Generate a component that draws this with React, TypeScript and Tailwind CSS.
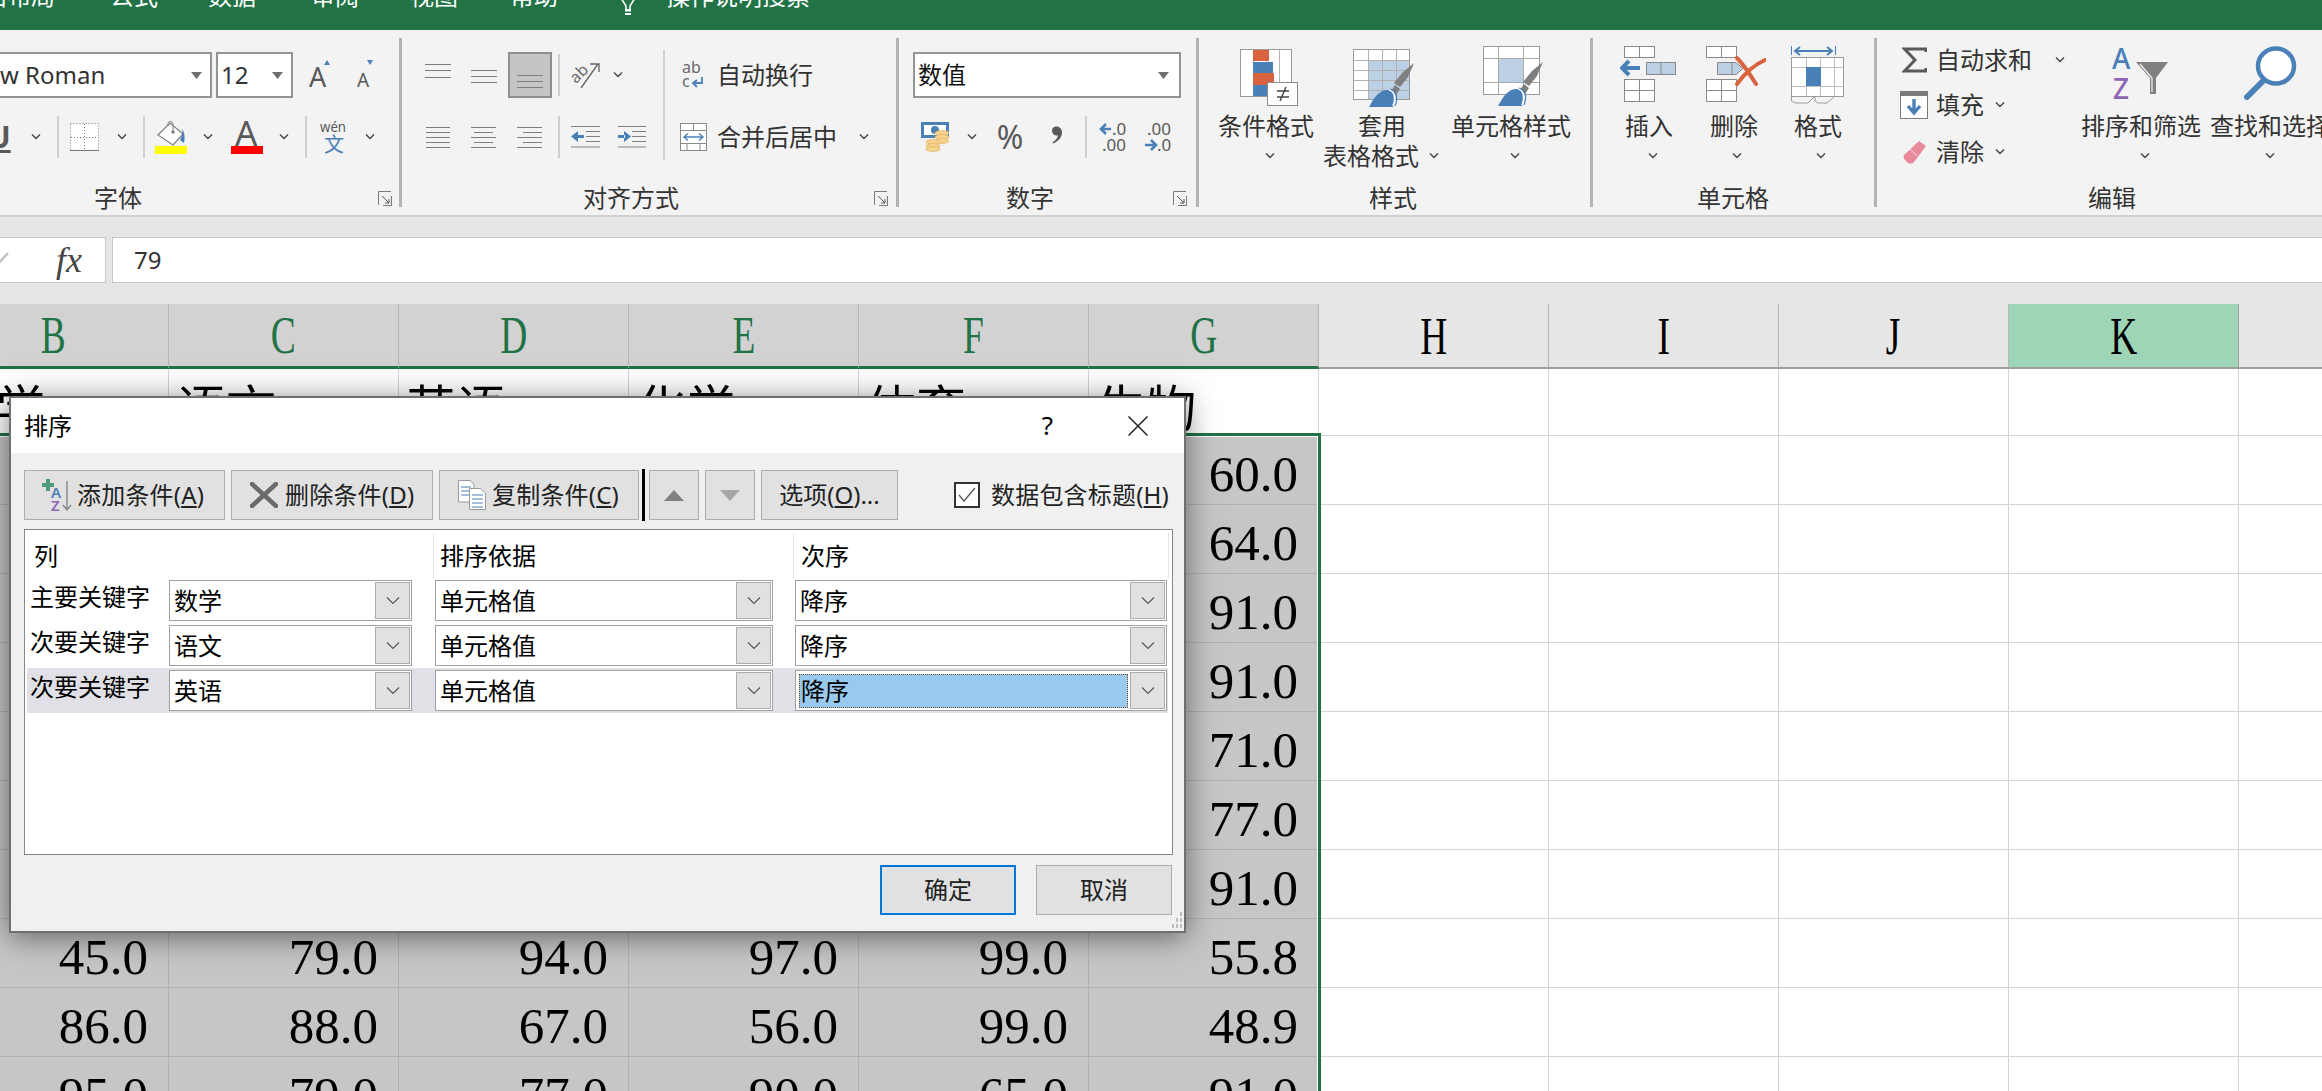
import React from "react";

const CJK = "font-['Noto_Sans','Noto_Sans_CJK_SC',sans-serif]";
const SERIF = "font-['Liberation_Serif','Noto_Sans_CJK_SC',serif]";

function Chev({ className = "" }: { className?: string }) {
  return (
    <svg width="10" height="6" viewBox="0 0 10 6" className={"shrink-0 " + className}>
      <polyline points="1,0.5 5,4.5 9,0.5" fill="none" stroke="#444" strokeWidth="1.4" />
    </svg>
  );
}
function Tri({ className = "" }: { className?: string }) {
  return (
    <svg width="11" height="7" viewBox="0 0 11 7" className={"shrink-0 " + className}>
      <polygon points="0,0 11,0 5.5,7" fill="#6e6e6e" />
    </svg>
  );
}
function Launcher({ className = "" }: { className?: string }) {
  return (
    <svg width="14" height="15" viewBox="0 0 14 15" className={"shrink-0 " + className}>
      <path d="M0.5 14V0.5H13" fill="none" stroke="#7a7a7a" />
      <path d="M13.5 5V14.5H5" fill="none" stroke="#7a7a7a" />
      <path d="M4 5L11 12M11 8V12H7" fill="none" stroke="#555" />
    </svg>
  );
}
function Sep({ className = "" }: { className?: string }) {
  return <div className={"w-[2px] h-[42px] bg-[#cfcfcf] shrink-0 " + className} />;
}
function GroupSep() {
  return <div className="w-[3px] mt-[8px] h-[169px] bg-[#b3b3b3] shrink-0" />;
}
function Label({ w, text, children }: { w: string; text: string; children?: React.ReactNode }) {
  return (
    <div className="h-[30px] mt-auto mb-[2px] flex items-center">
      <div className={w + " shrink-0 text-center text-[24px] leading-[30px] text-[#333]"}>{text}</div>
      {children}
    </div>
  );
}
function Lines({ w, ys, widths, className = "" }: { w: number; ys: number[]; widths?: [number, number][]; className?: string }) {
  const h = Math.max(...ys) + 1;
  return (
    <svg width={w} height={h} viewBox={`0 0 ${w} ${h}`} className={"shrink-0 " + className}>
      {ys.map((y, i) => {
        const p = widths ? widths[i] : [0, w];
        return <line key={i} x1={p[0]} x2={p[1]} y1={y + 0.5} y2={y + 0.5} stroke="#7d7d7d" strokeWidth="1" />;
      })}
    </svg>
  );
}

function Brush({ dx, dy }: { dx: number; dy: number }) {
  return (
    <g transform={`translate(${dx} ${dy})`}>
      <path d="M45 0L39 14L31 24L25 20L34 9Z" fill="#7f7f7f" />
      <path d="M31 26L27 32L22 28L26 22Z" fill="#7f7f7f" />
      <path d="M0 44C5 34 11 26 20 27C26 28 27 36 24 44Z" fill="#4a80b8" />
      <path d="M20 27C26 28 27 36 24 43" fill="none" stroke="#fff" strokeWidth="1.5" />
      <path d="M21 26C28 28 29 36 26 43" fill="none" stroke="#4a80b8" strokeWidth="1.2" />
    </g>
  );
}

function CondIcon() {
  return (
    <svg width="58" height="58" viewBox="0 0 58 58">
      <rect x="0.5" y="1.5" width="51" height="47" fill="#fff" stroke="#9a9a9a" />
      {[13, 26, 39].map((x) => <line key={x} x1={x + 0.5} x2={x + 0.5} y1="2" y2="48" stroke="#b5b5b5" />)}
      <rect x="13" y="2" width="16" height="11" fill="#d9633f" />
      <rect x="13" y="14" width="20" height="11" fill="#4a80b8" />
      <rect x="13" y="25" width="21" height="12" fill="#d9633f" />
      <rect x="13" y="37" width="15" height="11" fill="#4a80b8" />
      <rect x="27.5" y="34.5" width="30" height="23" fill="#fff" stroke="#8a8a8a" />
      <path d="M37 43H49M37 49H49M46 39L40 53" stroke="#444" strokeWidth="1.4" fill="none" />
    </svg>
  );
}
function TableIcon() {
  return (
    <svg width="62" height="60" viewBox="0 0 62 60">
      <rect x="0.5" y="1.5" width="56" height="50" fill="#fff" stroke="#9a9a9a" />
      <rect x="15" y="12" width="41" height="39" fill="#bcd0e6" />
      {[15, 29, 43].map((x) => <line key={x} x1={x + 0.5} x2={x + 0.5} y1="2" y2="51" stroke="#b0b0b0" />)}
      {[12, 22, 32, 42].map((y) => <line key={y} x1="1" x2="56" y1={y + 0.5} y2={y + 0.5} stroke="#b0b0b0" />)}
      <Brush dx={16} dy={15} />
    </svg>
  );
}
function CellIcon() {
  return (
    <svg width="60" height="60" viewBox="0 0 60 60">
      <rect x="0.5" y="0.5" width="56" height="48" fill="#fff" stroke="#9a9a9a" />
      <rect x="15" y="12" width="25" height="24" fill="#bcd0e6" />
      <line x1="15.5" x2="15.5" y1="1" y2="48" stroke="#a8a8a8" />
      <line x1="40.5" x2="40.5" y1="1" y2="48" stroke="#a8a8a8" />
      <line x1="1" x2="56" y1="12.5" y2="12.5" stroke="#a8a8a8" />
      <line x1="1" x2="56" y1="36.5" y2="36.5" stroke="#a8a8a8" />
      <Brush dx={15} dy={16} />
    </svg>
  );
}
function MiniTable({ x, y }: { x: number; y: number }) {
  return (
    <g transform={`translate(${x} ${y})`}>
      <rect x="0.5" y="0.5" width="30" height="11" fill="#fff" stroke="#8a8a8a" />
      <line x1="15.5" x2="15.5" y1="0" y2="12" stroke="#8a8a8a" />
      <rect x="0.5" y="33.5" width="30" height="22" fill="#fff" stroke="#8a8a8a" />
      <line x1="15.5" x2="15.5" y1="33" y2="56" stroke="#8a8a8a" />
      <line x1="0" x2="31" y1="44.5" y2="44.5" stroke="#8a8a8a" />
    </g>
  );
}
function InsertIcon() {
  return (
    <svg width="56" height="58" viewBox="0 0 56 58">
      <MiniTable x={4} y={0} />
      <rect x="26.5" y="16.5" width="29" height="12" fill="#bcd0e6" stroke="#8a8a8a" />
      <line x1="41" x2="41" y1="17" y2="28" stroke="#8a8a8a" />
      <path d="M20 22H3M9 15L2 22L9 29" fill="none" stroke="#4a80b8" strokeWidth="4" />
    </svg>
  );
}
function DeleteIcon() {
  return (
    <svg width="60" height="58" viewBox="0 0 60 58">
      <MiniTable x={0} y={0} />
      <path d="M11.5 16.5H30L37 22.5L30 28.5H11.5Z" fill="#bcd0e6" stroke="#8a8a8a" />
      <line x1="26" x2="26" y1="17" y2="28" stroke="#8a8a8a" />
      <path d="M31 12C37 18 45 30 50 38M59 14C50 18 39 27 31 38" fill="none" stroke="#d9633f" strokeWidth="4" strokeLinecap="round" />
    </svg>
  );
}
function FormatIcon() {
  return (
    <svg width="54" height="58" viewBox="0 0 54 58">
      <path d="M0.5 0V9M44.5 0V9" stroke="#4a80b8" />
      <path d="M4 5H41M9 1L4 5L9 9M36 1L41 5L36 9" fill="none" stroke="#4a80b8" strokeWidth="2" />
      <rect x="0.5" y="11.5" width="52" height="39" fill="#fff" stroke="#9a9a9a" />
      {[15, 29, 43].map((x) => <line key={x} x1={x + 0.5} x2={x + 0.5} y1="12" y2="50" stroke="#bdbdbd" />)}
      {[21, 40].map((y) => <line key={y} x1="1" x2="52" y1={y + 0.5} y2={y + 0.5} stroke="#bdbdbd" />)}
      <rect x="15" y="21" width="15" height="19" fill="#4a80b8" />
      <path d="M0.5 51V55L4 57H17L23 51M24 51V55L27 57H36L43 51" fill="none" stroke="#9a9a9a" />
    </svg>
  );
}
function SortIcon() {
  return (
    <svg width="58" height="52" viewBox="0 0 58 52">
      <text x="0" y="21" fontSize="28" fontFamily="Noto Sans" fill="#4a80b8" fontWeight="500">A</text>
      <text x="1" y="51" fontSize="28" fontFamily="Noto Sans" fill="#8f64b4" fontWeight="500">Z</text>
      <path d="M24 14H56L44 30V46H38V30Z" fill="#808080" />
      <path d="M28 16L40 30V44" fill="none" stroke="#f3f3f3" strokeWidth="1.2" />
    </svg>
  );
}
function FindIcon() {
  return (
    <svg width="54" height="54" viewBox="0 0 54 54">
      <ellipse cx="33" cy="20" rx="18" ry="17.5" fill="#fff" stroke="#4a80b8" strokeWidth="4.5" />
      <path d="M21 34L4 51" stroke="#4a80b8" strokeWidth="6" strokeLinecap="round" />
    </svg>
  );
}
function BigCol({ icon, lines, ml, w, iconClass = "" }: { icon: React.ReactNode; lines: React.ReactNode[]; ml: string; w: string; iconClass?: string }) {
  return (
    <div className={ml + " " + w + " shrink-0 flex flex-col items-center pt-[16px]"}>
      <div className={"h-[60px] w-full flex justify-center items-start " + iconClass}>{icon}</div>
      <div className="mt-[5px] w-full text-[24px] text-[#333] whitespace-nowrap">
        {lines.map((l, i) => (
          <div key={i} className="h-[30px] leading-[30px] flex items-center justify-center">{l}</div>
        ))}
      </div>
    </div>
  );
}

function ComboBox({ w, text, selected = false }: { w: string; text: string; selected?: boolean }) {
  return (
    <div className={w + " h-[41px] shrink-0 border border-[#a0a0a0] bg-white flex items-center p-[1px]"}>
      <div className="flex-1 min-w-0 h-full flex items-center">
        {selected ? (
          <div className="w-full h-[34px] ml-[2px] mr-[2px] bg-[#99c9ee] border border-dotted border-[#7a4a20] flex items-center pl-[1px] text-[24px] leading-none text-black">{text}</div>
        ) : (
          <span className="pl-[3px] text-[24px] leading-none text-black">{text}</span>
        )}
      </div>
      <div className="w-[35px] h-[37px] shrink-0 bg-[#e1e1e1] border border-[#adadad] flex items-center justify-center">
        <svg width="14" height="8" viewBox="0 0 14 8"><polyline points="1,0.5 7,6.5 13,0.5" fill="none" stroke="#555" strokeWidth="1.1" /></svg>
      </div>
    </div>
  );
}
function SortRow({ label, a, b, c, active = false }: { label: string; a: string; b: string; c: string; active?: boolean }) {
  return (
    <div className={"h-[45px] w-[1141px] ml-[2px] flex items-center " + (active ? "bg-[#e0e0e6]" : "")}>
      <div className="w-[142px] shrink-0 pl-[3px] -mt-[7px] text-[24px] leading-[30px] text-black whitespace-nowrap">{label}</div>
      <ComboBox w="w-[243px]" text={a} />
      <ComboBox w="w-[338px] ml-[23px]" text={b} />
      <ComboBox w="w-[372px] ml-[22px]" text={c} selected={active} />
    </div>
  );
}

const cols = ["B", "C", "D", "E", "F", "G", "H", "I", "J", "K", "L"];
const headRow = ["数学", "语文", "英语", "化学", "体育", "生物"];
const dataRows: string[][] = [
  ["", "", "", "", "", "60.0"],
  ["", "", "", "", "", "64.0"],
  ["", "", "", "", "", "91.0"],
  ["", "", "", "", "", "91.0"],
  ["", "", "", "", "", "71.0"],
  ["", "", "", "", "", "77.0"],
  ["", "", "", "", "", "91.0"],
  ["45.0", "79.0", "94.0", "97.0", "99.0", "55.8"],
  ["86.0", "88.0", "67.0", "56.0", "99.0", "48.9"],
  ["95.0", "79.0", "77.0", "90.0", "65.0", "91.0"],
];

export default function App() {
  return (
    <div className={"relative w-[2322px] h-[1091px] overflow-hidden bg-white " + CJK}>
      {/* title tabs */}
      <div className="h-[30px] bg-[#217346] overflow-hidden flex text-white text-[24px] leading-[32px] whitespace-nowrap">
        <div className="flex -mt-[20px] h-[32px] -ml-[41px]">
          <span>页面布局</span>
          <span className="ml-[55px]">公式</span>
          <span className="ml-[50px]">数据</span>
          <span className="ml-[55px]">审阅</span>
          <span className="ml-[51px]">视图</span>
          <span className="ml-[52px]">帮助</span>
        </div>
        <svg width="20" height="30" viewBox="0 0 20 30" className="ml-[60px] shrink-0">
          <path d="M3 -2L8 6V10H12V6L17 -2" fill="none" stroke="#fff" strokeWidth="1.6" />
          <path d="M7 10.5H13M7 14H13" stroke="#fff" strokeWidth="1.8" />
        </svg>
        <span className="ml-[28px] -mt-[20px]">操作说明搜索</span>
      </div>

      {/* ribbon */}
      <div className="h-[187px] flex bg-[#f3f3f3] border-b-2 border-[#d0d0d0] overflow-hidden">
        {/* font */}
        <div className="w-[399px] shrink-0 flex flex-col">
          <div className="mt-[22px] h-[46px] flex items-center">
            <div className="-ml-[10px] w-[222px] h-[46px] shrink-0 border-2 border-[#959595] bg-white flex items-center pl-[8px] text-[24px] text-[#333]">
              <span>w Roman</span>
              <Tri className="ml-auto mr-[8px]" />
            </div>
            <div className="ml-[4px] w-[77px] h-[46px] shrink-0 border-2 border-[#959595] bg-white flex items-center pl-[3px] text-[24px] text-[#333]">
              <span>12</span>
              <Tri className="ml-auto mr-[8px]" />
            </div>
            <svg width="26" height="30" viewBox="0 0 26 30" className="ml-[16px] shrink-0">
              <text x="0" y="27" fontSize="27" fontFamily="Noto Sans" fill="#595959">A</text>
              <polygon points="15,5 21,5 18,0" fill="#4a80b8" />
            </svg>
            <svg width="20" height="30" viewBox="0 0 20 30" className="ml-[22px] shrink-0">
              <text x="0" y="27" fontSize="19" fontFamily="Noto Sans" fill="#595959">A</text>
              <polygon points="10,0 16,0 13,5" fill="#4a80b8" />
            </svg>
          </div>
          <div className="mt-[17px] h-[44px] flex items-center">
            <span className="-ml-[12px] w-[20px] shrink-0 text-[30px] font-bold underline text-[#595959] leading-none">U</span>
            <Chev className="ml-[23px]" />
            <Sep className="ml-[16px]" />
            <svg width="29" height="28" viewBox="0 0 29 28" className="ml-[11px] shrink-0">
              <rect x="0.5" y="0.5" width="28" height="27" fill="#fff" stroke="#777" strokeDasharray="1 2" />
              <path d="M14.5 1V27M1 14.5H28" stroke="#777" strokeDasharray="1 2" />
              <path d="M0 27.5H29" stroke="#777" />
            </svg>
            <Chev className="ml-[18px]" />
            <Sep className="ml-[16px]" />
            <svg width="32" height="34" viewBox="0 0 32 34" className="ml-[10px] shrink-0">
              <path d="M15 3L28 14L18 25L3 15Z" fill="#fff" stroke="#808080" strokeWidth="1.2" />
              <path d="M13 6C12 0 18 0 18 5V11" fill="none" stroke="#808080" />
              <circle cx="18" cy="12" r="1.8" fill="#808080" />
              <path d="M27 9C30 13 30 18 29 23L25 20C27 16 28 13 27 9Z" fill="#4a80b8" />
              <rect x="0" y="26" width="32" height="8" fill="#ffff00" />
            </svg>
            <Chev className="ml-[16px]" />
            <svg width="32" height="34" viewBox="0 0 32 34" className="ml-[18px] shrink-0">
              <text x="4" y="26" fontSize="35" fontFamily="Noto Sans" fill="#595959">A</text>
              <rect x="0" y="26" width="32" height="8" fill="#ff0000" />
            </svg>
            <Chev className="ml-[16px]" />
            <Sep className="ml-[16px]" />
            <svg width="26" height="34" viewBox="0 0 26 34" className="ml-[13px] shrink-0">
              <text x="0" y="12" fontSize="14" fontFamily="Noto Sans" fill="#595959" textLength="26" lengthAdjust="spacingAndGlyphs">wén</text>
              <text x="4" y="32" fontSize="20" fontFamily="Noto Sans CJK SC" fill="#4a80b8">文</text>
            </svg>
            <Chev className="ml-[19px]" />
          </div>
          <Label w="w-[236px]" text="字体"><Launcher className="ml-[142px]" /></Label>
        </div>
        <GroupSep />

        {/* alignment */}
        <div className="w-[494px] shrink-0 flex flex-col">
          <div className="flex">
            <div className="w-[261px] shrink-0">
              <div className="mt-[22px] h-[46px] flex items-center">
                <Lines w={26} ys={[0, 6, 13]} className="ml-[23px] -mt-[8px]" />
                <Lines w={26} ys={[0, 6, 12]} widths={[[0, 26], [0, 26], [0, 26]]} className="ml-[20px] mt-[2px]" />
                <div className="ml-[11px] w-[44px] h-[46px] shrink-0 bg-[#c5c5c5] border-2 border-[#8f8f8f] flex items-end justify-center pb-[8px]">
                  <Lines w={26} ys={[0, 6, 12]} />
                </div>
                <Sep className="ml-[6px]" />
                <svg width="30" height="28" viewBox="0 0 30 28" className="ml-[11px] shrink-0">
                  <text x="0" y="17" fontSize="16" fontFamily="Noto Sans" fill="#6a6a6a" transform="rotate(-45 10 14)">ab</text>
                  <path d="M10 27L27 3M19 3H28V11" fill="none" stroke="#6a6a6a" strokeWidth="1.4" />
                </svg>
                <Chev className="ml-[12px]" />
              </div>
              <div className="mt-[17px] h-[44px] flex items-center">
                <Lines w={24} ys={[0, 5, 10, 15, 20]} className="ml-[24px]" />
                <Lines w={25} ys={[0, 5, 10, 15, 20]} widths={[[0, 25], [3, 22], [0, 25], [3, 22], [0, 25]]} className="ml-[21px]" />
                <Lines w={25} ys={[0, 5, 10, 15, 20]} widths={[[0, 25], [6, 25], [0, 25], [6, 25], [0, 25]]} className="ml-[21px]" />
                <Sep className="ml-[16px]" />
                <svg width="29" height="22" viewBox="0 0 29 22" className="ml-[11px] shrink-0">
                  <path d="M0 5.5L7 0V11ZM6 4H13V7H6Z" transform="translate(0 5)" fill="#4a80b8" />
                  <path d="M0 0.5H29M15 5.5H29M15 10.5H29M15 15.5H29M0 21H29" stroke="#808080" />
                </svg>
                <svg width="28" height="22" viewBox="0 0 28 22" className="ml-[18px] shrink-0">
                  <path d="M13 5.5L6 0V11ZM0 4H7V7H0Z" transform="translate(0 5)" fill="#4a80b8" />
                  <path d="M0 0.5H28M14 5.5H28M14 10.5H28M14 15.5H28M0 21H28" stroke="#808080" />
                </svg>
              </div>
            </div>
            <div className="w-[2px] h-[110px] mt-[20px] bg-[#cfcfcf] shrink-0" />
            <div className="flex-1">
              <div className="mt-[22px] h-[46px] flex items-center text-[24px] text-[#333]">
                <svg width="23" height="28" viewBox="0 0 23 28" className="ml-[17px] shrink-0">
                  <text x="0" y="12" fontSize="16" fontFamily="Noto Sans" fill="#6a6a6a">ab</text>
                  <text x="0" y="26" fontSize="16" fontFamily="Noto Sans" fill="#6a6a6a">c</text>
                  <path d="M20 16V22H12M15 19L11 22L15 26" fill="none" stroke="#4a80b8" strokeWidth="1.8" />
                </svg>
                <span className="ml-[12px]">自动换行</span>
              </div>
              <div className="mt-[17px] h-[44px] flex items-center text-[24px] text-[#333]">
                <svg width="27" height="28" viewBox="0 0 27 28" className="ml-[15px] shrink-0">
                  <rect x="0.5" y="0.5" width="26" height="27" fill="#fff" stroke="#8a8a8a" />
                  <path d="M0 7.5H27M0 20.5H27M13.5 0V7M7 21V27M20 21V27" stroke="#8a8a8a" />
                  <path d="M4 14H23M8 10.5L4 14L8 17.5M19 10.5L23 14L19 17.5" fill="none" stroke="#4a80b8" strokeWidth="1.4" />
                </svg>
                <span className="ml-[10px]">合并后居中</span>
                <Chev className="ml-[22px]" />
              </div>
            </div>
          </div>
          <Label w="w-[458px]" text="对齐方式"><Launcher className="ml-[14px]" /></Label>
        </div>
        <GroupSep />

        {/* number */}
        <div className="w-[297px] shrink-0 flex flex-col">
          <div className="mt-[22px] h-[46px] flex">
            <div className="ml-[14px] w-[268px] h-[46px] border-2 border-[#959595] bg-white flex items-center pl-[3px] text-[24px] text-[#111]">
              <span>数值</span>
              <Tri className="ml-auto mr-[10px]" />
            </div>
          </div>
          <div className="mt-[17px] h-[44px] flex items-center">
            <svg width="28" height="30" viewBox="0 0 28 30" className="ml-[22px] shrink-0">
              <rect x="0" y="0" width="28" height="16" fill="#4a80b8" />
              <rect x="3" y="3" width="22" height="10" fill="#fff" />
              <circle cx="14" cy="8" r="4" fill="#4a80b8" />
              <g fill="#f5d28e" stroke="#e2b567" strokeWidth="0.7">
                <ellipse cx="21" cy="11" rx="7" ry="2.5" /><ellipse cx="21" cy="15" rx="7" ry="2.5" /><ellipse cx="21" cy="19" rx="7" ry="2.5" />
                <ellipse cx="12" cy="20" rx="7" ry="2.5" /><ellipse cx="12" cy="24" rx="7" ry="2.5" /><ellipse cx="12" cy="27" rx="7" ry="2.5" />
              </g>
            </svg>
            <Chev className="ml-[18px]" />
            <span className="ml-[19px] w-[28px] shrink-0 text-[32px] leading-none text-[#595959] text-center">%</span>
            <svg width="16" height="18" viewBox="0 0 16 18" className="ml-[25px] shrink-0 -mt-[4px]">
              <path d="M3 4.5C3 2 5 0.5 7.5 0.5C10.5 0.5 13 3 13 6.5C13 11 9.5 15.5 4 17.5L3.5 16.5C6.5 14.5 8.5 12 9 9.5C6 10 3 8 3 4.5Z" fill="#595959" />
            </svg>
            <Sep className="ml-[20px]" />
            <svg width="28" height="30" viewBox="0 0 28 30" className="ml-[12px] shrink-0">
              <path d="M12 7H3M7 2L2 7L7 12" fill="none" stroke="#4a80b8" strokeWidth="2.6" />
              <text x="13" y="13" fontSize="17" fontFamily="Noto Sans" fill="#595959">.0</text>
              <text x="3" y="29" fontSize="17" fontFamily="Noto Sans" fill="#595959">.00</text>
            </svg>
            <svg width="30" height="30" viewBox="0 0 30 30" className="ml-[17px] shrink-0">
              <text x="3" y="13" fontSize="17" fontFamily="Noto Sans" fill="#595959">.00</text>
              <path d="M1 23H11M7 18L12 23L7 28" fill="none" stroke="#4a80b8" strokeWidth="2.6" />
              <text x="13" y="29" fontSize="17" fontFamily="Noto Sans" fill="#595959">.0</text>
            </svg>
          </div>
          <Label w="w-[262px]" text="数字"><Launcher className="ml-[12px]" /></Label>
        </div>
        <GroupSep />

        {/* styles */}
        <div className="w-[391px] shrink-0 flex flex-col">
          <div className="flex">
            <BigCol ml="ml-[8px]" w="w-[118px]" iconClass="pl-[5px] pt-[2px]" icon={<CondIcon />} lines={["条件格式", <Chev key="c" className="ml-[8px]" />]} />
            <BigCol ml="" w="w-[114px]" iconClass="pl-[3px] pt-[2px]" icon={<TableIcon />} lines={["套用", <span key="t" className="flex items-center -ml-[2px]"><span>表格格式</span><Chev className="ml-[10px]" /></span>]} />
            <BigCol ml="ml-[12px]" w="w-[120px]" iconClass="pl-[3px]" icon={<CellIcon />} lines={["单元格样式", <Chev key="c" className="ml-[8px]" />]} />
          </div>
          <Label w="w-[388px]" text="样式" />
        </div>
        <GroupSep />

        {/* cells */}
        <div className="w-[281px] shrink-0 flex flex-col">
          <div className="flex">
            <BigCol ml="ml-[21px]" w="w-[70px]" iconClass="pr-[3px]" icon={<InsertIcon />} lines={["插入", <Chev key="c" className="ml-[8px]" />]} />
            <BigCol ml="ml-[15px]" w="w-[70px]" iconClass="pl-[4px]" icon={<DeleteIcon />} lines={["删除", <Chev key="c" className="ml-[6px]" />]} />
            <BigCol ml="ml-[14px]" w="w-[70px]" iconClass="pt-0" icon={<FormatIcon />} lines={["格式", <Chev key="c" className="ml-[6px]" />]} />
          </div>
          <Label w="w-[280px]" text="单元格" />
        </div>
        <GroupSep />

        {/* editing */}
        <div className="w-[445px] shrink-0 flex flex-col">
          <div className="flex">
            <div className="w-[204px] shrink-0 pt-[8px] text-[24px] text-[#333]">
              <div className="h-[44px] flex items-center">
                <svg width="25" height="26" viewBox="0 0 25 26" className="ml-[25px] shrink-0">
                  <path d="M24 5V2H2.5L13 13L2.5 24H24V21" fill="none" stroke="#595959" strokeWidth="3" />
                </svg>
                <span className="ml-[9px]">自动求和</span>
                <Chev className="ml-[23px]" />
              </div>
              <div className="h-[46px] flex items-center">
                <svg width="28" height="28" viewBox="0 0 28 28" className="ml-[23px] shrink-0">
                  <rect x="0.5" y="0.5" width="27" height="27" fill="#fff" stroke="#7a7a7a" />
                  <rect x="0" y="0" width="28" height="5" fill="#7a7a7a" />
                  <path d="M14 8V21M8 15L14 22L20 15" fill="none" stroke="#4a80b8" strokeWidth="3.4" />
                </svg>
                <span className="ml-[8px]">填充</span>
                <Chev className="ml-[11px]" />
              </div>
              <div className="h-[48px] flex items-center">
                <svg width="24" height="24" viewBox="0 0 24 24" className="ml-[26px] shrink-0">
                  <path d="M16 1L23 6L11 22C9 24 6 24 4 22L2 20C0 18 0 16 2 14Z" fill="#e98a9c" />
                  <path d="M7 9L14 16" stroke="#f6d5db" strokeWidth="1" />
                </svg>
                <span className="ml-[9px]">清除</span>
                <Chev className="ml-[11px]" />
              </div>
            </div>
            <BigCol ml="" w="w-[120px]" iconClass="pt-[2px]" icon={<SortIcon />} lines={["排序和筛选", <Chev key="c" className="ml-[8px]" />]} />
            <BigCol ml="ml-[9px]" w="w-[120px]" icon={<FindIcon />} lines={[<span key="f" className="w-[120px] shrink-0">查找和选择</span>, <Chev key="c" />]} />
          </div>
          <Label w="w-[470px]" text="编辑" />
        </div>
      </div>

      {/* formula bar */}
      <div className="h-[87px] bg-[#e6e6e6] pt-[20px]">
        <div className="h-[46px] flex">
          <div className="w-[106px] shrink-0 bg-white border-y border-r border-[#c8c8c8] flex items-center">
            <svg width="14" height="16" viewBox="0 0 14 16" className="-ml-[4px] shrink-0">
              <path d="M0 14L12 1" stroke="#c4c4c4" strokeWidth="2.5" />
            </svg>
            <span className="ml-[46px] text-[36px] leading-none italic text-[#444] font-['Liberation_Serif',serif]">fx</span>
          </div>
          <div className="ml-[6px] flex-1 bg-white border-y border-l border-[#c8c8c8] flex items-center pl-[21px] text-[24px] text-[#333]">79</div>
        </div>
      </div>

      {/* grid */}
      <div className={"-ml-[61px] w-[2530px] " + SERIF}>
        <div className="flex h-[65px]">
          {cols.map((c, i) => (
            <div
              key={c}
              className={
                "w-[230px] shrink-0 flex items-center justify-center border-r " +
                (i < 6
                  ? "bg-[#d2d2d2] text-[#217346] border-[#b5b5b5] border-b-[3px] border-b-[#217346]"
                  : c === "K"
                  ? "bg-[#9fd5b7] text-black border-[#9e9e9e] border-b-2 border-b-[#9e9e9e]"
                  : "bg-[#e6e6e6] text-black border-[#b5b5b5] border-b-2 border-b-[#9e9e9e]")
              }
            >
              <span className="text-[52px] leading-none scale-x-[0.72] mt-[2px]">{c}</span>
            </div>
          ))}
        </div>
        <div className="flex h-[67px]">
          {cols.map((c, i) => (
            <div key={c} className={"w-[230px] shrink-0 border-r border-b border-[#d4d4d4] overflow-hidden pl-[7px] text-[50px] leading-[78px] text-black " + CJK}>
              {headRow[i] || ""}
            </div>
          ))}
        </div>
        {dataRows.map((r, ri) => (
          <div key={ri} className="flex h-[69px]">
            {cols.map((c, i) => (
              <div
                key={c}
                className={
                  "w-[230px] shrink-0 border-r border-b flex items-center justify-end pr-[20px] text-[51px] leading-none pt-[8px] text-black " +
                  (i < 6 ? "bg-[#c6c6c6] border-[#b0b0b0]" : "bg-white border-[#d4d4d4]")
                }
              >
                {r[i] || ""}
              </div>
            ))}
          </div>
        ))}
      </div>

      {/* selection outline */}
      <div className="absolute -left-[10px] top-[433px] w-[1331px] h-[800px] border-[3px] border-[#217346] shadow-[inset_0_0_0_1px_#fff]" />

      {/* dialog */}
      <div className="absolute left-[9px] top-[396px] w-[1177px] h-[537px] bg-[#f0f0f0] border-2 border-[#6f6f6f] shadow-[0_4px_28px_rgba(0,0,0,0.5)]">
        <div className="h-[55px] bg-white flex items-center pl-[13px] text-[24px] text-black">
          <span>排序</span>
          <span className="ml-auto mr-[75px] text-[26px]">?</span>
          <svg width="20" height="20" viewBox="0 0 20 20" className="mr-[36px] shrink-0">
            <path d="M0.5 0.5L19.5 19.5M19.5 0.5L0.5 19.5" stroke="#222" strokeWidth="1.5" />
          </svg>
        </div>
        <div className="pl-[13px] pt-[17px] text-[24px] text-[#222]">
          <div className="h-[50px] flex items-center">
            <button className="w-[201px] h-[50px] shrink-0 bg-[#e1e1e1] border border-[#adadad] flex items-center pl-[16px]">
              <svg width="32" height="34" viewBox="0 0 32 34" className="shrink-0">
                <path d="M7 1V13M1 7H13" stroke="#4f9a7a" strokeWidth="4" />
                <text x="10" y="20" fontSize="15" fontFamily="Noto Sans" fill="#4a80b8" fontWeight="600">A</text>
                <text x="10" y="33" fontSize="15" fontFamily="Noto Sans" fill="#8f64b4" fontWeight="600">Z</text>
                <path d="M26 3V31M22 27L26 32L30 27" fill="none" stroke="#888" strokeWidth="1.4" />
              </svg>
              <span className="ml-[4px] tracking-[0.2px]">添加条件(<u>A</u>)</span>
            </button>
            <button className="ml-[6px] w-[202px] h-[50px] shrink-0 bg-[#e1e1e1] border border-[#adadad] flex items-center pl-[18px]">
              <svg width="28" height="26" viewBox="0 0 28 26" className="shrink-0">
                <path d="M2 2L26 24M26 2L2 24" stroke="#6a6a6a" strokeWidth="4.5" strokeLinecap="round" />
              </svg>
              <span className="ml-[7px] tracking-[0.2px]">删除条件(<u>D</u>)</span>
            </button>
            <button className="ml-[6px] w-[200px] h-[50px] shrink-0 bg-[#e1e1e1] border border-[#adadad] flex items-center pl-[18px]">
              <svg width="28" height="30" viewBox="0 0 28 30" className="shrink-0">
                <path d="M0.5 0.5H12L16 4V22H0.5Z" fill="#fff" stroke="#999" />
                <path d="M3 7H13M3 11H13M3 15H13" stroke="#4a80b8" />
                <path d="M11.5 8.5H22L27.5 13V29.5H11.5Z" fill="#fff" stroke="#999" />
                <path d="M14 15H25M14 19H25M14 23H25M14 27H25" stroke="#4a80b8" />
              </svg>
              <span className="ml-[6px] tracking-[0.2px]">复制条件(<u>C</u>)</span>
            </button>
            <div className="ml-[3px] w-[3px] h-[52px] bg-black shrink-0" />
            <button className="ml-[4px] w-[50px] h-[50px] shrink-0 bg-[#e1e1e1] border border-[#adadad] flex items-center justify-center">
              <svg width="20" height="11" viewBox="0 0 20 11"><polygon points="0,11 20,11 10,0" fill="#808080" /></svg>
            </button>
            <button className="ml-[6px] w-[50px] h-[50px] shrink-0 bg-[#e1e1e1] border border-[#adadad] flex items-center justify-center">
              <svg width="20" height="11" viewBox="0 0 20 11"><polygon points="0,0 20,0 10,11" fill="#a6a6a6" /></svg>
            </button>
            <button className="ml-[6px] w-[137px] h-[50px] shrink-0 bg-[#e1e1e1] border border-[#adadad] text-center">选项(<u>O</u>)...</button>
            <div className="ml-[56px] w-[26px] h-[26px] shrink-0 bg-white border-2 border-[#333] flex items-center justify-center">
              <svg width="18" height="16" viewBox="0 0 18 16"><path d="M1 8L6 14L17 1" fill="none" stroke="#555" strokeWidth="1.3" /></svg>
            </div>
            <span className="ml-[11px] whitespace-nowrap tracking-[0.2px]">数据包含标题(<u>H</u>)</span>
          </div>

          <div className="mt-[9px] w-[1149px] h-[326px] bg-white border border-[#85858c] pt-[3px] text-black">
            <div className="h-[45px] flex items-center ml-[2px]">
              <div className="w-[406px] shrink-0 pl-[7px]">列</div>
              <div className="w-px h-[45px] bg-[#e5e5e5] shrink-0" />
              <div className="w-[359px] shrink-0 pl-[6px]">排序依据</div>
              <div className="w-px h-[45px] bg-[#e5e5e5] shrink-0" />
              <div className="w-[375px] shrink-0 pl-[7px] h-[45px] flex items-center border-r border-[#e5e5e5]">次序</div>
            </div>
            <SortRow label="主要关键字" a="数学" b="单元格值" c="降序" />
            <SortRow label="次要关键字" a="语文" b="单元格值" c="降序" />
            <SortRow label="次要关键字" a="英语" b="单元格值" c="降序" active />
          </div>

          <div className="mt-[10px] w-[1148px] flex justify-end gap-[20px]">
            <button className="w-[136px] h-[50px] bg-[#e1e1e1] border-2 border-[#0078d7] text-center">确定</button>
            <button className="w-[136px] h-[50px] bg-[#e1e1e1] border border-[#adadad] text-center">取消</button>
          </div>
        </div>
        <svg width="14" height="18" viewBox="0 0 14 18" className="absolute right-[1px] bottom-[1px]">
          <g fill="#bdbdbd">
            <rect x="11" y="0" width="2" height="4" /><rect x="7" y="6" width="2" height="4" /><rect x="11" y="6" width="2" height="4" />
            <rect x="3" y="12" width="2" height="4" /><rect x="7" y="12" width="2" height="4" /><rect x="11" y="12" width="2" height="4" />
          </g>
        </svg>
      </div>
    </div>
  );
}
